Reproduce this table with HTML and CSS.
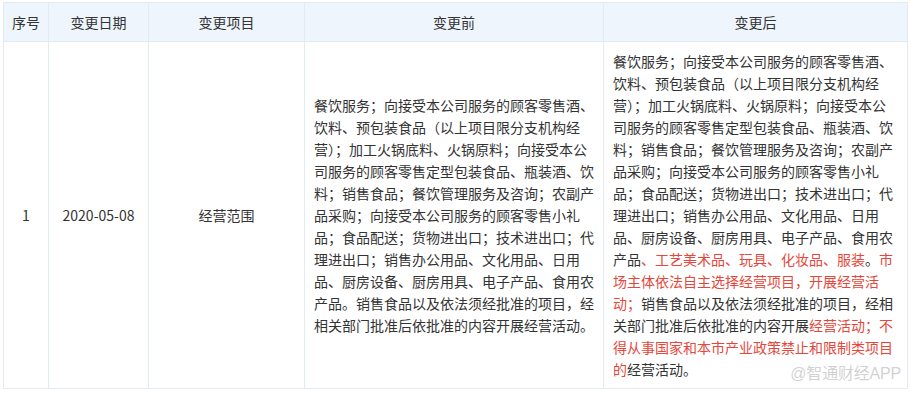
FILE: index.html
```html
<!DOCTYPE html>
<html lang="zh-CN">
<head>
<meta charset="utf-8">
<title>变更记录</title>
<link rel="stylesheet" href="styles.css">
</head>
<body>
<div class="wrap">
<table class="changes">
  <colgroup>
    <col class="c-no">
    <col class="c-date">
    <col class="c-item">
    <col class="c-before">
    <col class="c-after">
  </colgroup>
  <thead>
    <tr>
      <th>序号</th>
      <th>变更日期</th>
      <th>变更项目</th>
      <th>变更前</th>
      <th>变更后</th>
    </tr>
  </thead>
  <tbody>
    <tr>
      <td class="center">1</td>
      <td class="center">2020-05-08</td>
      <td class="center">经营范围</td>
      <td class="text">餐饮服务；向接受本公司服务的顾客零售酒、饮料、预包装食品（以上项目限分支机构经营）；加工火锅底料、火锅原料；向接受本公司服务的顾客零售定型包装食品、瓶装酒、饮料；销售食品；餐饮管理服务及咨询；农副产品采购；向接受本公司服务的顾客零售小礼品；食品配送；货物进出口；技术进出口；代理进出口；销售办公用品、文化用品、日用品、厨房设备、厨房用具、电子产品、食用农产品。销售食品以及依法须经批准的项目，经相关部门批准后依批准的内容开展经营活动。</td>
      <td class="text">餐饮服务；向接受本公司服务的顾客零售酒、饮料、预包装食品（以上项目限分支机构经营）；加工火锅底料、火锅原料；向接受本公司服务的顾客零售定型包装食品、瓶装酒、饮料；销售食品；餐饮管理服务及咨询；农副产品采购；向接受本公司服务的顾客零售小礼品；食品配送；货物进出口；技术进出口；代理进出口；销售办公用品、文化用品、日用品、厨房设备、厨房用具、电子产品、食用农产品<span class="hl">、工艺美术品、玩具、化妆品、服装</span>。<span class="hl">市场主体依法自主选择经营项目，开展经营活动；</span>销售食品以及依法须经批准的项目，经相关部门批准后依批准的内容开展<span class="hl">经营活动；不得从事国家和本市产业政策禁止和限制类项目的</span>经营活动。</td>
    </tr>
  </tbody>
</table>
<div class="watermark">@智通财经APP</div>
</div>
</body>
</html>
```

FILE: styles.css
```css
html, body {
  margin: 0;
  padding: 0;
  background: #ffffff;
}

.wrap {
  position: relative;
  padding: 2px 0 0 3px;
}

.changes {
  border-collapse: collapse;
  table-layout: fixed;
  width: 904px;
  font-family: "Noto Sans CJK SC", "Microsoft YaHei", sans-serif;
  font-size: 14px;
  line-height: 22px;
  color: #333333;
}

.c-no { width: 45px; }
.c-date { width: 100px; }
.c-item { width: 156px; }
.c-before { width: 299px; }
.c-after { width: 304px; }

.changes th,
.changes td {
  border: 1px solid #e2eaf2;
  font-weight: normal;
}

.changes th {
  background: #eef5fc;
  padding: 8px 0;
  text-align: center;
  color: #333333;
}

.changes td {
  padding: 8px 9px 8px 9px;
  vertical-align: middle;
}

.changes td.center {
  text-align: center;
  padding-left: 0;
  padding-right: 0;
}

.changes td.text {
  text-align: left;
}

.hl {
  color: #e5473b;
}

.watermark {
  position: absolute;
  right: 10px;
  top: 363px;
  font-family: "Liberation Sans", "Noto Sans CJK SC", sans-serif;
  font-size: 16px;
  line-height: 22px;
  color: rgba(170, 170, 170, 0.55);
  text-shadow: 0 0 1px #ffffff;
  letter-spacing: -0.2px;
}
```
